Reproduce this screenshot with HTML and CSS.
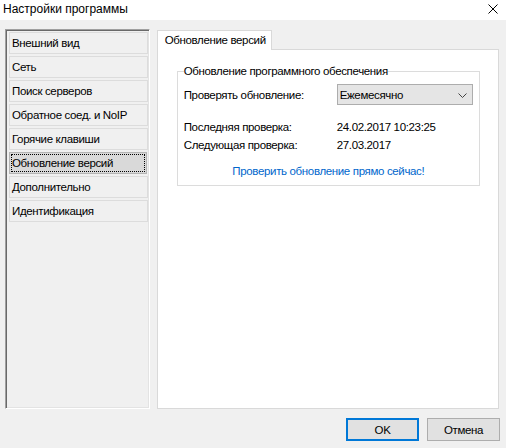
FILE: index.html
```html
<!DOCTYPE html>
<html lang="ru">
<head>
<meta charset="utf-8">
<title>Настройки программы</title>
<link rel="stylesheet" href="styles.css">
</head>
<body>
<div class="window">
  <div class="titlebar">
    <span class="title">Настройки программы</span>
    <svg class="close" width="10" height="10" viewBox="0 0 10 10"><path d="M0.5 0.5L9.5 9.5M9.5 0.5L0.5 9.5" stroke="#000" stroke-width="1" fill="none"/></svg>
  </div>
  <div class="main">
    <div class="sidebar">
      <div class="item">Внешний вид</div>
      <div class="item">Сеть</div>
      <div class="item">Поиск серверов</div>
      <div class="item">Обратное соед. и NoIP</div>
      <div class="item">Горячие клавиши</div>
      <div class="item selected"><span class="focus">Обновление версий</span></div>
      <div class="item">Дополнительно</div>
      <div class="item">Идентификация</div>
    </div>
    <div class="tabs">
      <div class="tabstrip">
        <div class="tab">Обновление версий</div>
      </div>
      <div class="page">
        <fieldset class="group">
          <legend>Обновление программного обеспечения</legend>
          <div class="row combo-row">
            <span class="label">Проверять обновление:</span>
            <div class="combo">
              <span>Ежемесячно</span>
              <svg class="chev" width="9" height="5" viewBox="0 0 9 5"><path d="M0.5 0.5L4.5 4.5L8.5 0.5" stroke="#444" stroke-width="1" fill="none"/></svg>
            </div>
          </div>
          <div class="row info first">
            <span class="label">Последняя проверка:</span>
            <span class="value">24.02.2017 10:23:25</span>
          </div>
          <div class="row info">
            <span class="label">Следующая проверка:</span>
            <span class="value">27.03.2017</span>
          </div>
          <div class="link-row"><span class="link">Проверить обновление прямо сейчас!</span></div>
        </fieldset>
      </div>
    </div>
  </div>
  <div class="footer">
    <button class="btn default">OK</button>
    <button class="btn">Отмена</button>
  </div>
</div>
</body>
</html>
```

FILE: styles.css
```css
html, body {
  margin: 0;
  padding: 0;
}
body {
  font-family: "Liberation Sans", Arial, sans-serif;
  font-size: 11.5px;
  letter-spacing: -0.35px;
  color: #000;
  background: #f0f0f0;
}
.window {
  width: 506px;
  height: 448px;
  display: flex;
  flex-direction: column;
  background: #f0f0f0;
  overflow: hidden;
  white-space: nowrap;
}
.titlebar {
  height: 20px;
  background: #fff;
  display: flex;
  align-items: center;
  justify-content: space-between;
  padding: 0 8px 0 3px;
  box-sizing: border-box;
}
.title {
  font-size: 12px;
  letter-spacing: 0;
  line-height: 18px;
  margin-top: -2px;
}
.close {
  margin-top: -3px;
}
.main {
  display: flex;
  padding: 9px 7px 0 5px;
  gap: 7px;
  height: 380px;
}
.sidebar {
  width: 140px;
  height: 376px;
  border-top: 1px solid #a0a0a0;
  border-left: 1px solid #a0a0a0;
  border-right: 1px solid #ffffff;
  border-bottom: 1px solid #ffffff;
  box-shadow: inset 1px 1px 0 #696969, inset -1px -1px 0 #e3e3e3;
  padding: 2px 0 0 3px;
  display: flex;
  flex-direction: column;
  gap: 2px;
}
.item {
  width: 135px;
  height: 20px;
  border: 1px solid #dcdcdc;
  background: #f0f0f0;
  display: flex;
  align-items: center;
  padding-left: 2px;
  line-height: 16px;
}
.item.selected {
  background: #d9d9d9;
  border-color: #b4b4b4;
  padding: 1px;
  width: 134px;
  height: 18px;
}
.focus {
  flex: 1;
  height: 16px;
  border: 1px dotted #000;
  display: flex;
  align-items: center;
}
.tabs {
  width: 343px;
  display: flex;
  flex-direction: column;
}
.tabstrip {
  height: 20px;
  display: flex;
  position: relative;
  z-index: 1;
  margin-top: 1px;
}
.tab {
  width: 115px;
  height: 20px;
  background: #fff;
  border: 1px solid #d9d9d9;
  border-bottom: none;
  padding-left: 7px;
  box-sizing: border-box;
  line-height: 18px;
}
.page {
  flex: 1;
  margin-top: -1px;
  background: #fff;
  border: 1px solid #d9d9d9;
  padding: 14px 18px 0 19px;
}
.group {
  margin: 0;
  padding: 0 0 0 6px;
  border: 1px solid #dcdcdc;
  height: 120px;
  min-width: 0;
}
.group legend {
  padding: 0;
  margin-left: 0;
  line-height: 14px;
}
.row {
  display: flex;
  align-items: center;
}
.label {
  width: 153px;
  flex: none;
}
.combo-row {
  margin-top: 6px;
  height: 21px;
}
.combo {
  height: 19px;
  border: 1px solid #adadad;
  background: #e5e5e5;
  display: flex;
  align-items: center;
  justify-content: space-between;
  padding: 0 5px 0 2px;
  width: 127px;
}
.chev {
  margin-top: 1px;
}
.info {
  height: 18px;
}
.info.first {
  margin-top: 13px;
}
.link-row {
  margin-top: 11px;
  text-align: center;
  padding-right: 6px;
}
.link {
  color: #0066cc;
}
.footer {
  display: flex;
  justify-content: flex-end;
  gap: 8px;
  padding: 9px 6px 0 0;
}
.btn {
  width: 73px;
  height: 23px;
  background: #e1e1e1;
  border: 1px solid #adadad;
  font-family: inherit;
  font-size: 11.5px;
  letter-spacing: -0.35px;
  color: #000;
  padding: 0;
  margin: 0;
}
.btn.default {
  border: 2px solid #0078d7;
}
```
